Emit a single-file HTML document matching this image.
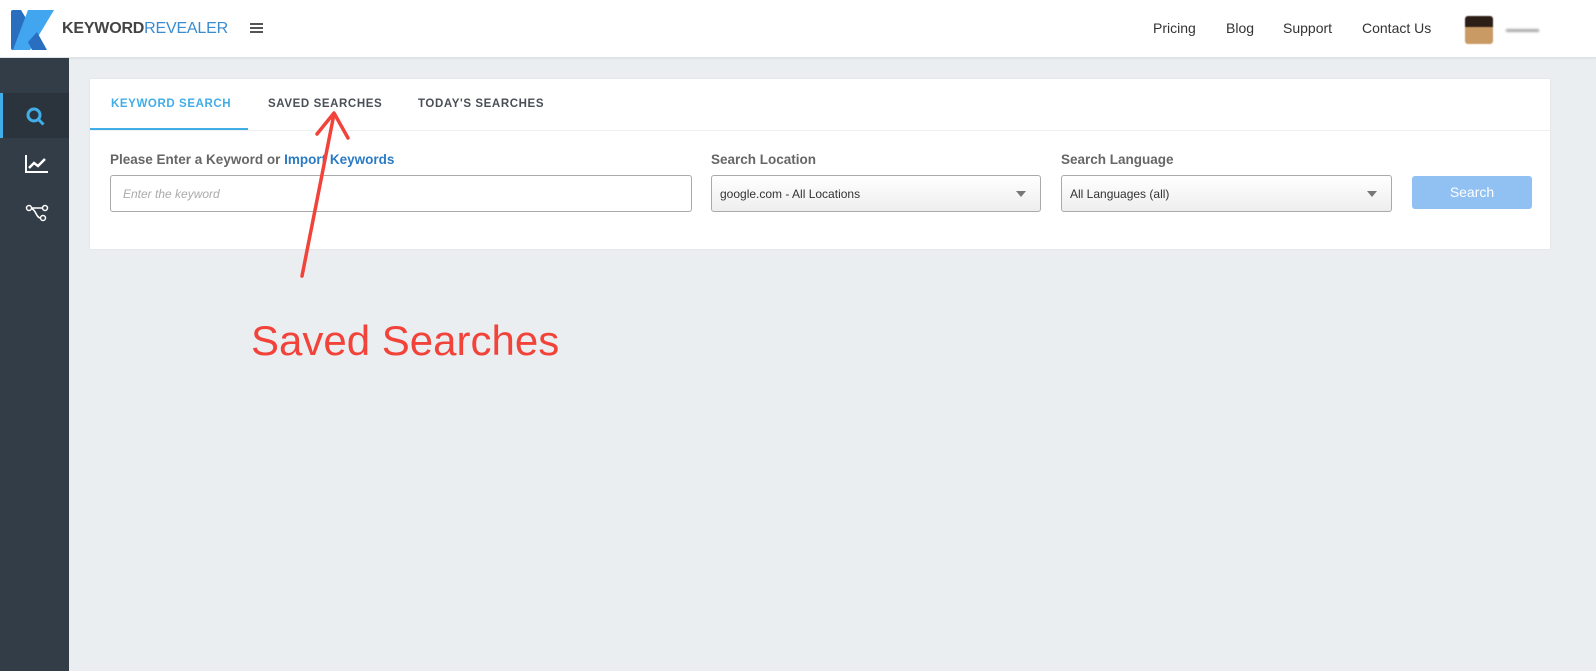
<!DOCTYPE html>
<html><head><style>
*{box-sizing:border-box;margin:0;padding:0}
body{width:1596px;height:671px;background:#eaeef1;font-family:"Liberation Sans",sans-serif;position:relative;overflow:hidden}
.hdr{position:absolute;left:0;top:0;width:1596px;height:58px;background:#fff;border-bottom:1px solid #dde2e6;box-shadow:0 1px 2px rgba(0,0,0,.05)}
.side{position:absolute;left:0;top:58px;width:69px;height:613px;background:#333d47}
.nav a{position:absolute;top:20px;font-size:14px;color:#333;}
.card{position:absolute;left:89px;top:78px;width:1462px;height:172px;background:#fff;border:1px solid #e3e7ea}
.tab{position:absolute;top:19px;font-size:11.5px;font-weight:bold;letter-spacing:.6px;color:#4a4f57}
.lbl{position:absolute;font-size:13.5px;font-weight:bold;color:#666}
.box{position:absolute;top:96px;height:37px;border:1px solid #aaa;border-radius:3px;font-size:12px;color:#333;padding:11px 8px}
.sel{background:linear-gradient(#fff,#eee)}
.caret{position:absolute;right:14px;top:15px;border-left:5px solid transparent;border-right:5px solid transparent;border-top:6px solid #777}
</style></head><body>
<div class="hdr">
<svg style="position:absolute;left:10px;top:9px" width="45" height="42" viewBox="0 0 45 42"><path d="M1 3Q1 1 3 1h8l12 20-12 20H3Q1 41 1 39z" fill="#2a6fbf"/><path d="M18 1h26L20 41H3z" fill="#41a5ef"/><path d="M27 23l10 18H22l-4-8z" fill="#2a6fbf"/></svg>
<div style="position:absolute;left:62px;top:20px;font-size:16px;letter-spacing:-.2px"><b style="color:#444">KEYWORD</b><span style="color:#3a8bd0">REVEALER</span></div>
<div style="position:absolute;left:250px;top:23px;width:13px;height:2px;background:#555;box-shadow:0 4px 0 #555,0 8px 0 #555"></div>
<div class="nav"><a style="left:1153px">Pricing</a><a style="left:1226px">Blog</a><a style="left:1283px">Support</a><a style="left:1362px">Contact Us</a></div>
<div style="position:absolute;left:1465px;top:16px;width:28px;height:28px;background:linear-gradient(#2b1e16 40%,#c99a63 40%);border-radius:3px;filter:blur(.6px)"></div>
<div style="position:absolute;left:1506px;top:29px;width:33px;height:3px;background:#aaa;filter:blur(1px)"></div>
</div>
<div class="side">
<div style="position:absolute;left:0;top:35px;width:69px;height:45px;background:#2b343d;border-left:3px solid #41aee8"></div>
<svg style="position:absolute;left:25px;top:48px" width="22" height="22" viewBox="0 0 22 22"><circle cx="9" cy="9" r="6" stroke="#41aee8" stroke-width="3" fill="none"/><path d="M13.5 13.5l5 5" stroke="#41aee8" stroke-width="3"/></svg>
<svg style="position:absolute;left:25px;top:96px" width="24" height="20" viewBox="0 0 24 20"><path d="M1 1v17h22" stroke="#fff" stroke-width="2" fill="none"/><path d="M4 14l5-5 4 3 7-7" stroke="#fff" stroke-width="2.5" fill="none"/></svg>
<svg style="position:absolute;left:25px;top:145px" width="24" height="20" viewBox="0 0 24 20"><circle cx="4" cy="5" r="2.5" stroke="#fff" stroke-width="1.5" fill="none"/><circle cx="20" cy="5" r="2.5" stroke="#fff" stroke-width="1.5" fill="none"/><circle cx="18" cy="15" r="2.5" stroke="#fff" stroke-width="1.5" fill="none"/><path d="M6.5 5h11M7 6c4 1 4 8 8 9" stroke="#fff" stroke-width="1.6" fill="none"/></svg>
</div>
<div class="card">
<div class="tab" style="left:21px;color:#41aee8">KEYWORD SEARCH</div>
<div class="tab" style="left:178px">SAVED SEARCHES</div>
<div class="tab" style="left:328px">TODAY'S SEARCHES</div>
<div style="position:absolute;left:0;top:49px;width:158px;height:3px;background:#41aee8"></div>
<div style="position:absolute;left:0;top:51px;width:1460px;height:1px;background:#eef0f2"></div>
<div class="lbl" style="left:20px;top:73px">Please Enter a Keyword or <span style="color:#2a7bc4">Import Keywords</span></div>
<div class="lbl" style="left:621px;top:73px">Search Location</div>
<div class="lbl" style="left:971px;top:73px">Search Language</div>
<div class="box" style="left:20px;width:582px;color:#aaa;font-style:italic;padding-left:12px">Enter the keyword</div>
<div class="box sel" style="left:621px;width:330px">google.com - All Locations<span class="caret"></span></div>
<div class="box sel" style="left:971px;width:331px">All Languages (all)<span class="caret"></span></div>
<div style="position:absolute;left:1322px;top:97px;width:120px;height:33px;background:#91c0f2;border-radius:3px;color:#fff;font-size:14px;text-align:center;line-height:33px">Search</div>
</div>
<svg style="position:absolute;left:0;top:0" width="600" height="300"><path d="M302 276L334 114M317 134L334 113L348 138" stroke="#f2433a" stroke-width="3.5" fill="none" stroke-linecap="round" stroke-linejoin="round"/></svg>
<div style="position:absolute;left:251px;top:317px;font-size:42px;color:#f2433a">Saved Searches</div>
</body></html>
